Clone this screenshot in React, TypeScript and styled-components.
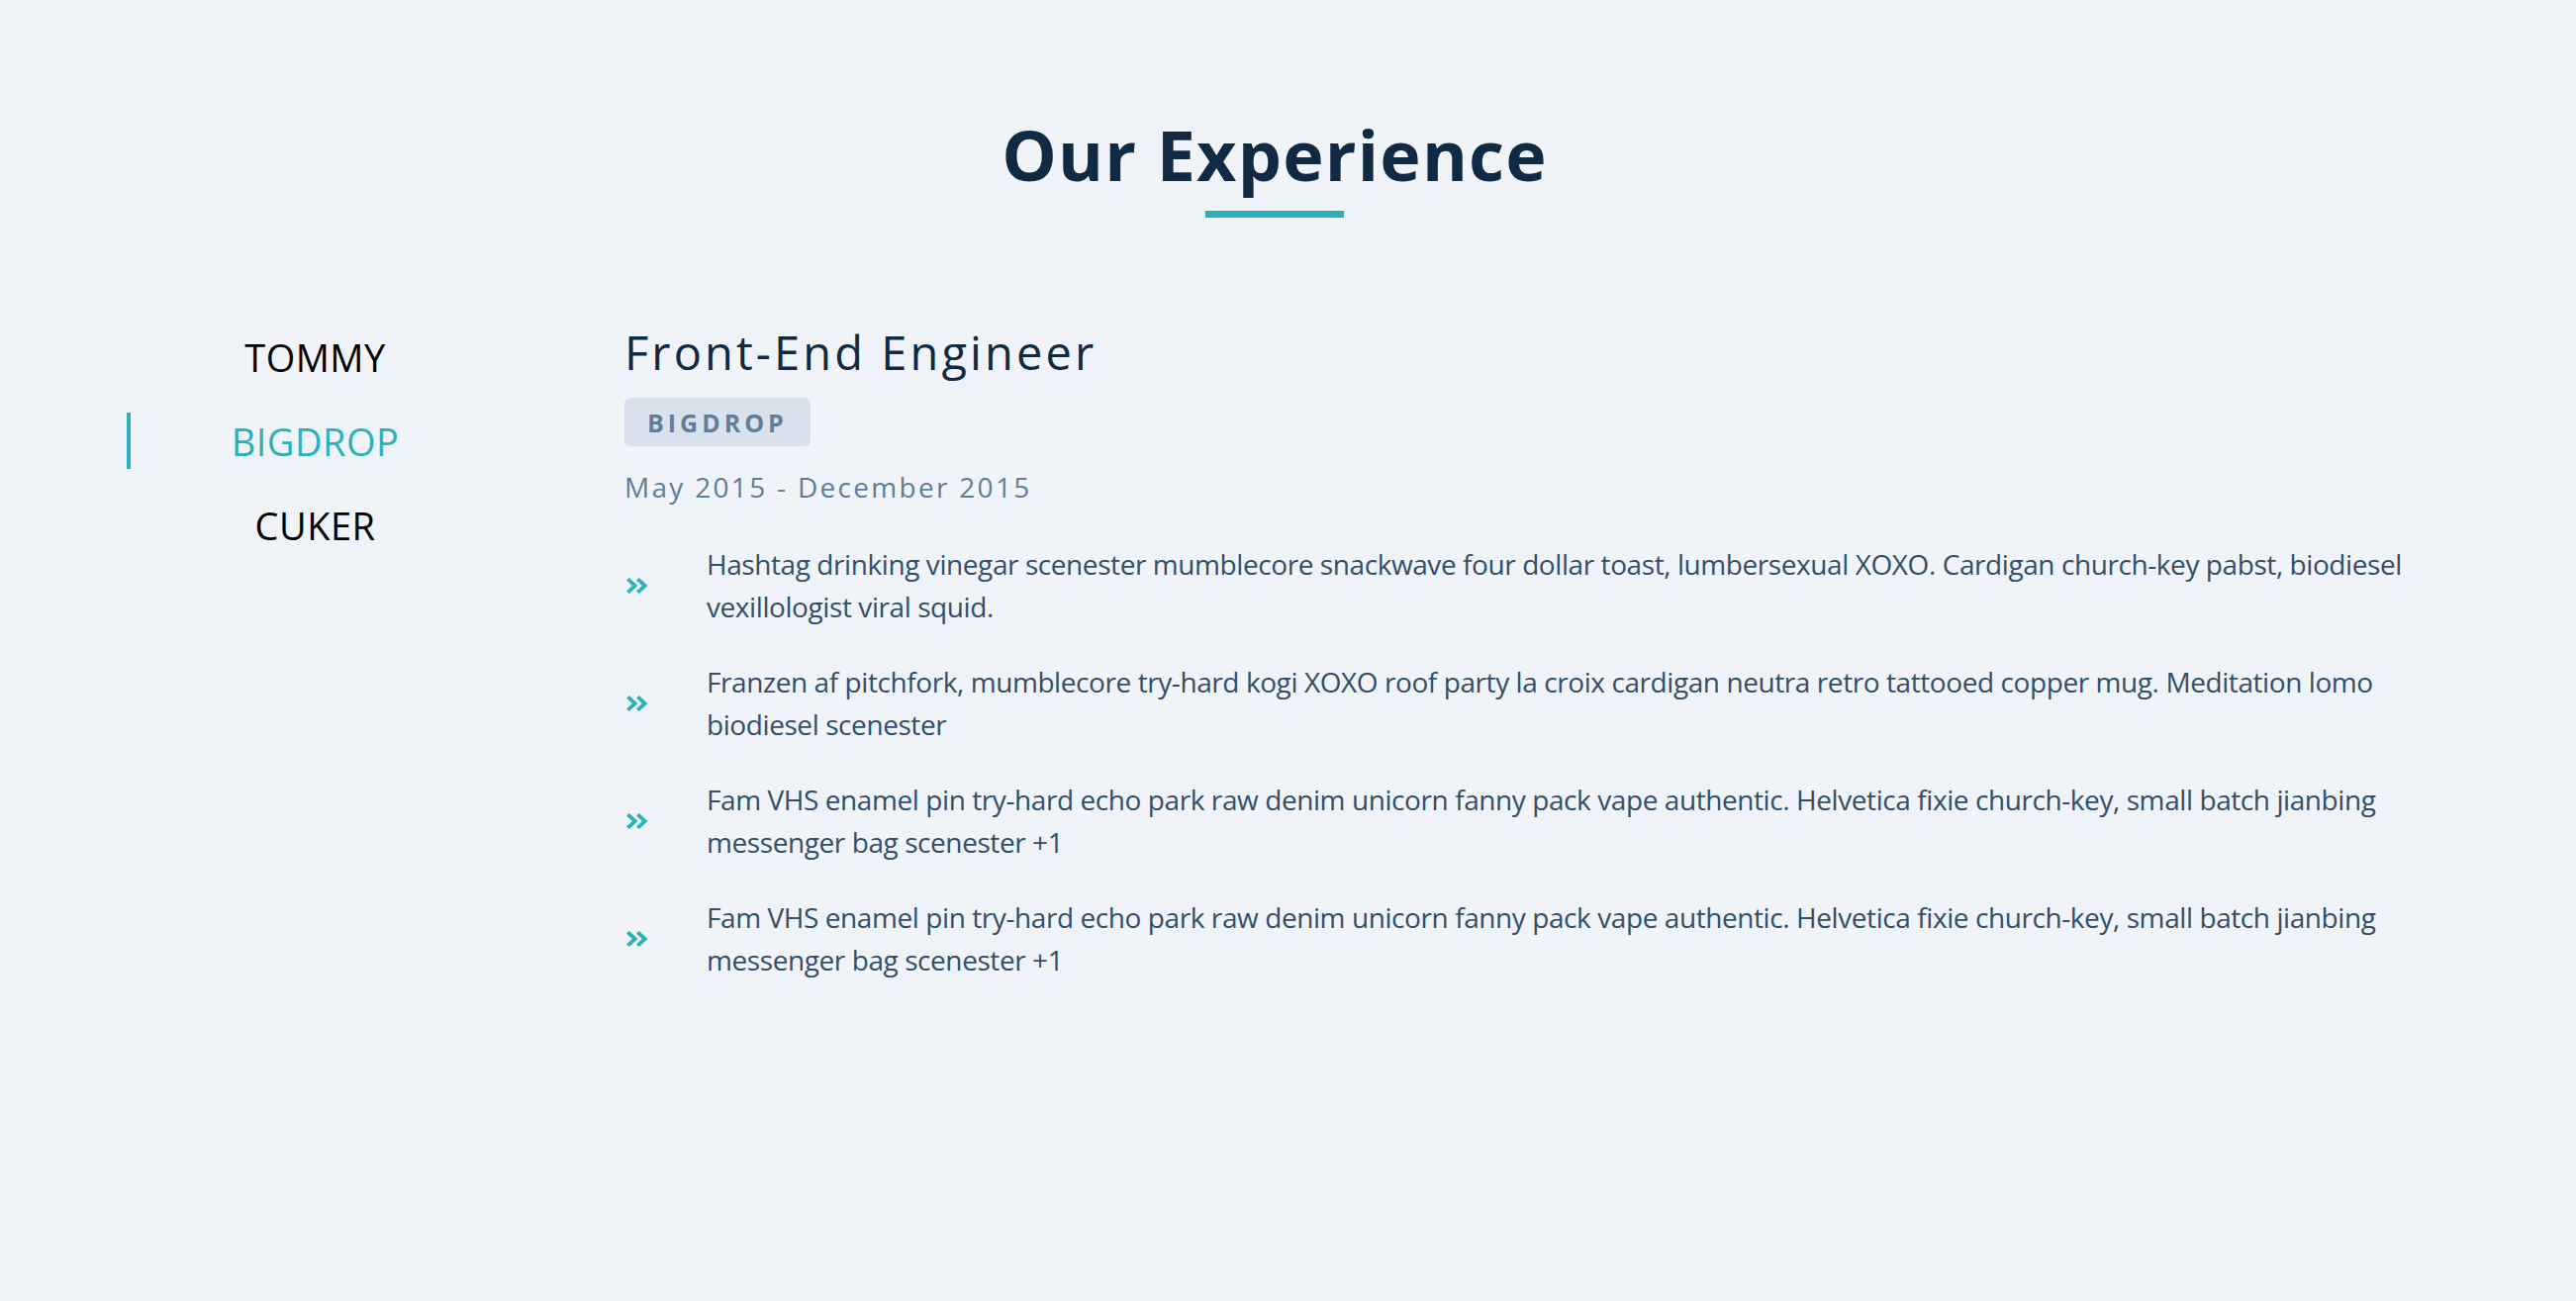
import React from "react";
import styled, { createGlobalStyle } from "styled-components";

const GlobalStyle = createGlobalStyle`
  html, body {
    margin: 0;
    padding: 0;
    background: #f0f4f8;
  }
  body {
    font-family: "Open Sans", "Noto Sans", sans-serif;
    -webkit-font-smoothing: antialiased;
  }
  * { box-sizing: border-box; }
`;

const Page = styled.main`
  min-height: 1315px;
  padding: 114px 27px 0 0;
`;

const Container = styled.section`
  width: 2320px;
  margin: 0 auto;
`;

const Header = styled.header`
  display: flex;
  flex-direction: column;
  align-items: center;
`;

const Title = styled.h2`
  margin: 0;
  font-size: 70px;
  line-height: 84px;
  font-weight: 700;
  letter-spacing: 1.2px;
  color: #102a43;
`;

const Underline = styled.div`
  width: 140px;
  height: 7px;
  margin-top: 15px;
  background: #2cb1bc;
`;

const Body = styled.div`
  display: grid;
  grid-template-columns: 377px 1fr;
  column-gap: 126px;
  margin-top: 108px;
`;

const Tabs = styled.nav`
  display: flex;
  flex-direction: column;
  gap: 28px;
  padding-top: 4px;
`;

const Tab = styled.button<{ $active?: boolean }>`
  height: 57px;
  display: flex;
  align-items: center;
  justify-content: center;
  padding: 0;
  border: 0;
  border-left: 4px solid ${(p) => (p.$active ? "#2cb1bc" : "transparent")};
  background: transparent;
  font-family: "Open Sans", sans-serif;
  font-size: 38px;
  letter-spacing: 0.5px;
  text-transform: uppercase;
  color: ${(p) => (p.$active ? "#2cb1bc" : "#000000")};
  cursor: pointer;
`;

const Panel = styled.article`
  display: flex;
  flex-direction: column;
  align-items: flex-start;
`;

const JobTitle = styled.h3`
  margin: 0;
  font-size: 47px;
  line-height: 56px;
  font-weight: 400;
  letter-spacing: 3.1px;
  color: #102a43;
`;

const Badge = styled.span`
  display: inline-flex;
  align-items: center;
  height: 49px;
  margin-top: 18px;
  padding: 0 23px;
  border-radius: 6px;
  background: #d9e2ec;
  color: #627d98;
  font-size: 25px;
  font-weight: 700;
  letter-spacing: 4px;
  text-transform: uppercase;
`;

const DateRange = styled.p`
  margin: 20px 0 0;
  font-size: 28px;
  line-height: 42px;
  letter-spacing: 2.3px;
  color: #627d98;
`;

const List = styled.ul`
  list-style: none;
  margin: 36px 0 0;
  padding: 0;
  display: flex;
  flex-direction: column;
  gap: 33px;
`;

const Item = styled.li`
  display: grid;
  grid-template-columns: 83px 1fr;
  align-items: center;
`;

const ItemText = styled.span`
  font-size: 28px;
  line-height: 43px;
  letter-spacing: -0.42px;
  color: #334e68;
`;

const Chevrons = () => (
  <svg width="22" height="16" viewBox="0 0 22 16" style={{ marginLeft: 2 }}>
    <polygon points="0,2.6 2.8,0 11.5,8 2.8,16 0,13.4 5.9,8" fill="#2cb1bc" />
    <polygon points="10,2.6 12.8,0 21.5,8 12.8,16 10,13.4 15.9,8" fill="#2cb1bc" />
  </svg>
);

const tabs = ["Tommy", "Bigdrop", "Cuker"];

const duties = [
  "Hashtag drinking vinegar scenester mumblecore snackwave four dollar toast, lumbersexual XOXO. Cardigan church-key pabst, biodiesel vexillologist viral squid.",
  "Franzen af pitchfork, mumblecore try-hard kogi XOXO roof party la croix cardigan neutra retro tattooed copper mug. Meditation lomo biodiesel scenester",
  "Fam VHS enamel pin try-hard echo park raw denim unicorn fanny pack vape authentic. Helvetica fixie church-key, small batch jianbing messenger bag scenester +1",
  "Fam VHS enamel pin try-hard echo park raw denim unicorn fanny pack vape authentic. Helvetica fixie church-key, small batch jianbing messenger bag scenester +1",
];

export default function App() {
  return (
    <>
      <GlobalStyle />
      <Page>
        <Container>
          <Header>
            <Title>Our Experience</Title>
            <Underline />
          </Header>
          <Body>
            <Tabs>
              {tabs.map((t) => (
                <Tab key={t} $active={t === "Bigdrop"}>
                  {t}
                </Tab>
              ))}
            </Tabs>
            <Panel>
              <JobTitle>Front-End Engineer</JobTitle>
              <Badge>Bigdrop</Badge>
              <DateRange>May 2015 - December 2015</DateRange>
              <List>
                {duties.map((d, i) => (
                  <Item key={i}>
                    <Chevrons />
                    <ItemText>{d}</ItemText>
                  </Item>
                ))}
              </List>
            </Panel>
          </Body>
        </Container>
      </Page>
    </>
  );
}
